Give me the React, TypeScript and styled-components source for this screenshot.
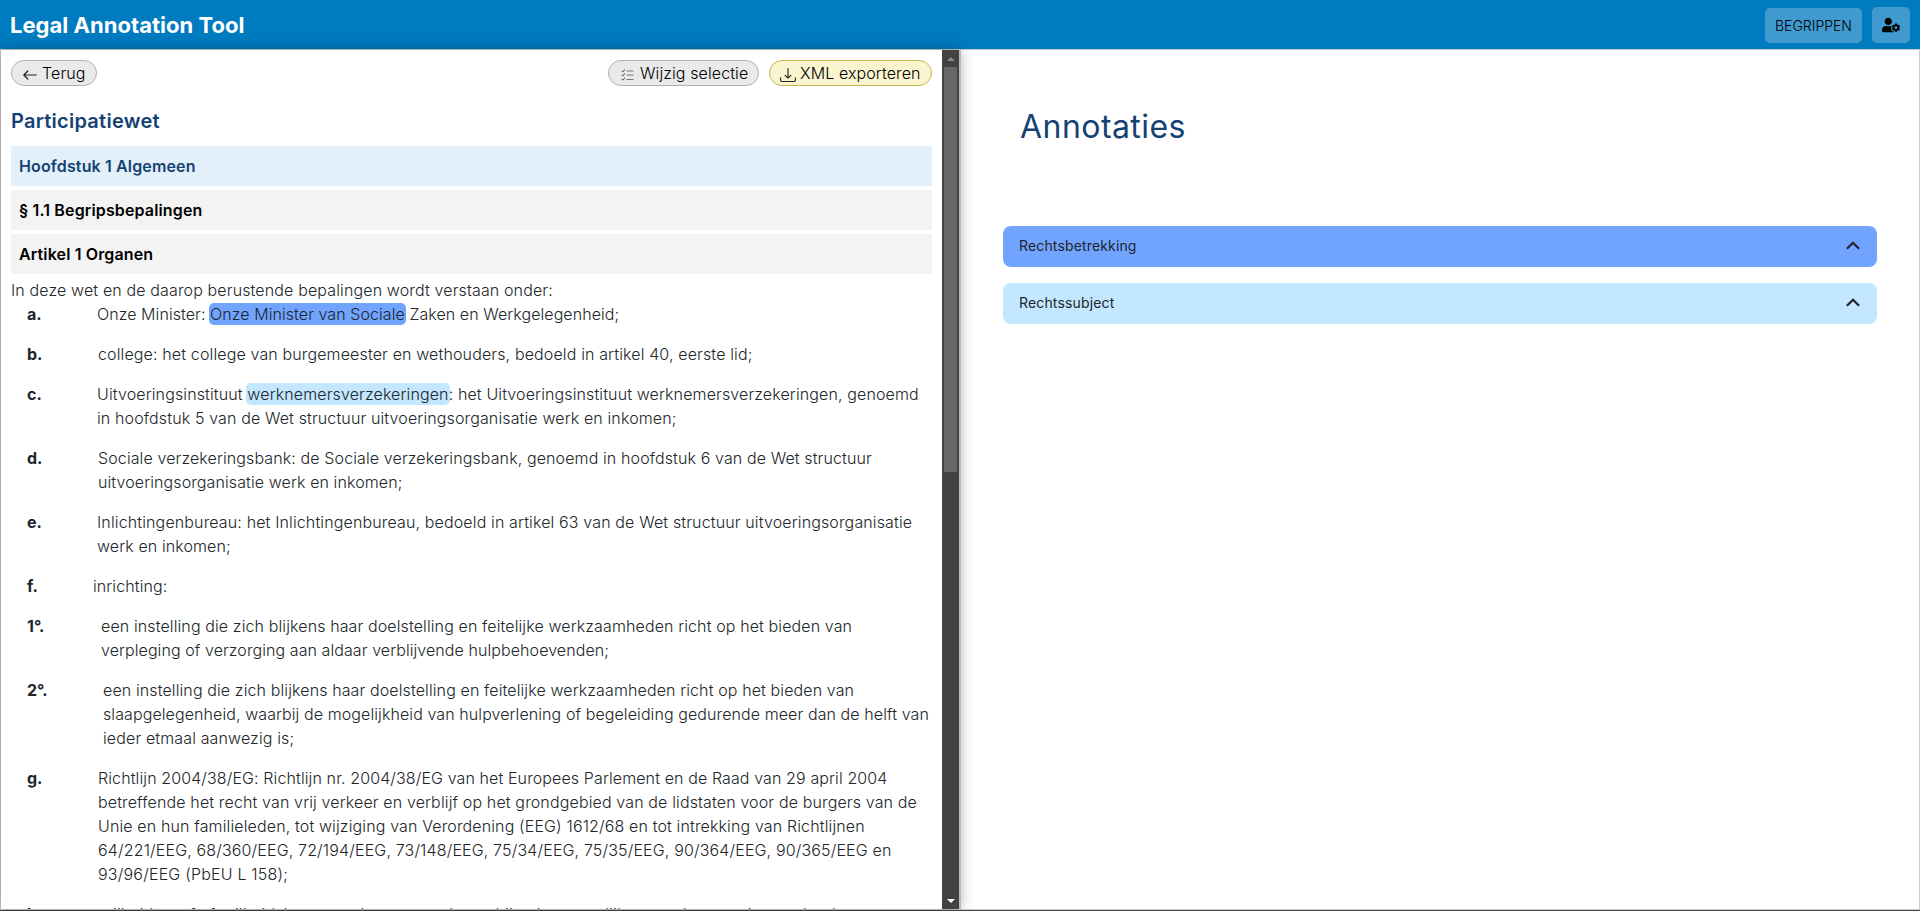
import React from "react";
import styled, { createGlobalStyle } from "styled-components";
import { FaUserCog } from "react-icons/fa";

const GlobalStyle = createGlobalStyle`
  *, *::before, *::after { box-sizing: border-box; }
  html, body { margin: 0; height: 100%; overflow: hidden; background: #fff; }
  body { font-family: Inter, "Liberation Sans", sans-serif; font-size: 16px; line-height: 24px; font-weight: 300; color: #212529; }
  h1, h2, h3, p { margin: 0; }
  button { font-family: inherit; cursor: pointer; }
`;

const Page = styled.div`
  display: flex;
  flex-direction: column;
  height: 911px;
  border-bottom: 1px solid #3d4a47;
`;

const Header = styled.header`
  display: flex;
  align-items: center;
  justify-content: space-between;
  height: 49px;
  padding: 1px 10px 0;
  background: #007bc0;
`;

const Brand = styled.h1`
  font-size: 22px;
  font-weight: 700;
  letter-spacing: 0.03px;
  color: #fff;
`;

const HeaderActions = styled.div`
  display: flex;
  align-items: center;
  gap: 10px;
`;

const HeaderButton = styled.button<{ $w: number; $h: number; $size?: number }>`
  display: flex;
  align-items: center;
  justify-content: center;
  width: ${(p) => p.$w}px;
  height: ${(p) => p.$h}px;
  padding: 0;
  border: 0;
  border-radius: 5px;
  background: #4099cf;
  color: #000;
  font-size: ${(p) => p.$size ?? 14}px;
  font-weight: 300;
`;

const Split = styled.div`
  display: flex;
  flex: 1;
  min-height: 0;
  border: 1px solid #ccc;
`;

const TextPane = styled.section`
  display: flex;
  width: 960px;
  box-shadow: 0 0 12px rgba(0, 0, 0, 0.3);
  border-right: 2px solid #bbb;
`;

const Document = styled.div`
  flex: 1;
  min-width: 0;
  padding: 10px 10px 0;
  overflow: hidden;
`;

const Scrollbar = styled.div`
  display: flex;
  flex-direction: column;
  align-items: center;
  width: 17px;
  flex: none;
  background: #424242;
`;

const ScrollArrow = styled.div<{ $end?: boolean }>`
  display: flex;
  align-items: center;
  justify-content: center;
  height: 17px;
  margin-top: ${(p) => (p.$end ? "auto" : "0")};
  svg { display: block; }
`;

const Thumb = styled.div`
  width: 13px;
  height: 405px;
  background: #686868;
`;

const Toolbar = styled.div`
  display: flex;
  justify-content: space-between;
  height: 26px;
`;

const ToolGroup = styled.div`
  display: flex;
  gap: 10px;
`;

const Pill = styled.button<{ $tone?: "yellow"; $w: number; $gap: number; $pad: number }>`
  display: flex;
  align-items: center;
  gap: ${(p) => p.$gap}px;
  width: ${(p) => p.$w}px;
  height: 26px;
  padding: 0 0 0 ${(p) => p.$pad}px;
  border: 1px solid ${(p) => (p.$tone ? "#c6b64f" : "#b1b1b1")};
  border-radius: 13px;
  background: ${(p) => (p.$tone ? "#faf4cf" : "#eaeaea")};
  color: #000;
  font-size: 16px;
  font-weight: 300;
  letter-spacing: 0.1px;
  white-space: nowrap;
  svg { flex: none; margin-top: 3px; }
`;

const LawTitle = styled.h2`
  margin: 23px 0 13px;
  font-size: 20px;
  line-height: 24px;
  font-weight: 600;
  letter-spacing: 0.25px;
  color: #154273;
`;

const SectionBar = styled.h3<{ $active?: boolean }>`
  height: 40px;
  margin-bottom: 4px;
  padding: 0 8px;
  line-height: 40px;
  font-size: 16px;
  font-weight: 600;
  letter-spacing: 0.14px;
  background: ${(p) => (p.$active ? "#e3f0f9" : "#f3f3f3")};
  color: ${(p) => (p.$active ? "#154273" : "#000")};
`;

const Intro = styled.p`
  margin-top: 4px;
  letter-spacing: 0.135px;
`;

const Items = styled.div`
  display: flex;
  flex-direction: column;
  gap: 16px;
`;

const Item = styled.div`
  display: flex;
  padding-left: 16px;
`;

const Label = styled.strong<{ $w: number }>`
  flex: none;
  width: ${(p) => p.$w}px;
  font-weight: 700;
`;

const Body = styled.p`
  white-space: nowrap;
`;

const Line = styled.span<{ $track: number }>`
  display: block;
  letter-spacing: ${(p) => p.$track}px;
`;

const Mark = styled.span<{ $tone: string }>`
  margin: 0 -1px;
  padding: 1px;
  border-radius: 5px;
  background: ${(p) => p.$tone};
`;

const NotesPane = styled.section`
  flex: 1;
  padding: 56px 42px 0;
`;

const NotesTitle = styled.h2`
  margin: 0 0 78px 17px;
  font-size: 32px;
  line-height: 42px;
  font-weight: 400;
  letter-spacing: 0.45px;
  color: #154273;
`;

const Accordion = styled.div<{ $tone: string }>`
  display: flex;
  align-items: center;
  justify-content: space-between;
  height: 41px;
  margin-bottom: 16px;
  padding: 0 17px 2px 16px;
  border-radius: 8px;
  background: ${(p) => p.$tone};
  font-size: 14px;
  font-weight: 400;
  letter-spacing: 0.15px;
`;

const blue = "#70a4ff";
const sky = "#c2e7ff";

type TextLine = [React.ReactNode, number];

const items: { label: string; w: number; lines: TextLine[] }[] = [
  { label: "a.", w: 70, lines: [[<>Onze Minister: <Mark $tone={blue}>Onze Minister van Sociale</Mark> Zaken en Werkgelegenheid;</>, 0.07]] },
  { label: "b.", w: 71, lines: [["college: het college van burgemeester en wethouders, bedoeld in artikel 40, eerste lid;", 0.135]] },
  {
    label: "c.",
    w: 70,
    lines: [
      [<>Uitvoeringsinstituut <Mark $tone={sky}>werknemersverzekeringen</Mark>: het Uitvoeringsinstituut werknemersverzekeringen, genoemd</>, 0.125],
      ["in hoofdstuk 5 van de Wet structuur uitvoeringsorganisatie werk en inkomen;", 0.13],
    ],
  },
  {
    label: "d.",
    w: 71,
    lines: [
      ["Sociale verzekeringsbank: de Sociale verzekeringsbank, genoemd in hoofdstuk 6 van de Wet structuur", 0.112],
      ["uitvoeringsorganisatie werk en inkomen;", 0.1],
    ],
  },
  {
    label: "e.",
    w: 70,
    lines: [
      ["Inlichtingenbureau: het Inlichtingenbureau, bedoeld in artikel 63 van de Wet structuur uitvoeringsorganisatie", 0.137],
      ["werk en inkomen;", 0.1],
    ],
  },
  { label: "f.", w: 66, lines: [["inrichting:", 0.1]] },
  {
    label: "1°.",
    w: 74,
    lines: [
      ["een instelling die zich blijkens haar doelstelling en feitelijke werkzaamheden richt op het bieden van", 0.115],
      ["verpleging of verzorging aan aldaar verblijvende hulpbehoevenden;", 0.08],
    ],
  },
  {
    label: "2°.",
    w: 76,
    lines: [
      ["een instelling die zich blijkens haar doelstelling en feitelijke werkzaamheden richt op het bieden van", 0.115],
      ["slaapgelegenheid, waarbij de mogelijkheid van hulpverlening of begeleiding gedurende meer dan de helft van", 0.09],
      ["ieder etmaal aanwezig is;", 0.13],
    ],
  },
  {
    label: "g.",
    w: 71,
    lines: [
      ["Richtlijn 2004/38/EG: Richtlijn nr. 2004/38/EG van het Europees Parlement en de Raad van 29 april 2004", 0.112],
      ["betreffende het recht van vrij verkeer en verblijf op het grondgebied van de lidstaten voor de burgers van de", 0.137],
      ["Unie en hun familieleden, tot wijziging van Verordening (EEG) 1612/68 en tot intrekking van Richtlijnen", 0.135],
      ["64/221/EEG, 68/360/EEG, 72/194/EEG, 73/148/EEG, 75/34/EEG, 75/35/EEG, 90/364/EEG, 90/365/EEG en", 0.15],
      ["93/96/EEG (PbEU L 158);", 0.2],
    ],
  },
  {
    label: "h.",
    w: 71,
    lines: [["vrijheidsstraf of vrijheidsbenemende maatregel: een bij onherroepelijk geworden vonnis opgelegde", 0.12]],
  },
];

const BackArrow = () => (
  <svg width="14" height="10" viewBox="0 0 14 10" fill="none" stroke="#222" strokeWidth="1.2" strokeLinecap="round" strokeLinejoin="round">
    <path d="M13.3 5H.8M4.8 1 .8 5l4 4" />
  </svg>
);

const ChecklistIcon = () => (
  <svg width="13" height="12" viewBox="0 0 13 12" fill="none">
    <path d="M5.5 2H12.5M5.5 6H12.5M5.5 10.5H12.5" stroke="#777" strokeWidth="1.2" />
    <path d="M.7 1.8 1.7 2.8 4 .5M.7 5.8 1.7 6.8 4 4.5M.7 10.1 1.7 11.1 4 8.8" stroke="#333" strokeWidth="1" />
  </svg>
);

const DownloadIcon = () => (
  <svg width="16" height="14" viewBox="0 0 16 14" fill="none" stroke="#222" strokeWidth="1.1" strokeLinecap="round" strokeLinejoin="round">
    <path d="M.6 9.8v2.2a1.5 1.5 0 0 0 1.5 1.5h11.8a1.5 1.5 0 0 0 1.5-1.5V9.8M8 .6v9.4M5.2 7.4 8 10.2l2.8-2.8" />
  </svg>
);

const Chevron = () => (
  <svg width="14" height="9" viewBox="0 0 14 9" fill="none" stroke="#212529" strokeWidth="2.2">
    <path d="M.9 7.7 7 1.7l6.1 6" />
  </svg>
);

export default function App() {
  return (
    <>
      <GlobalStyle />
      <Page>
        <Header>
          <Brand>Legal Annotation Tool</Brand>
          <HeaderActions>
            <HeaderButton $w={97} $h={35}>BEGRIPPEN</HeaderButton>
            <HeaderButton $w={38} $h={36} $size={18} aria-label="Beheer"><FaUserCog /></HeaderButton>
          </HeaderActions>
        </Header>
        <Split>
          <TextPane>
            <Document>
              <Toolbar>
                <Pill $w={86} $gap={5} $pad={11}><BackArrow />Terug</Pill>
                <ToolGroup>
                  <Pill $w={151} $gap={6} $pad={12}><ChecklistIcon />Wijzig selectie</Pill>
                  <Pill $tone="yellow" $w={163} $gap={4} $pad={10}><DownloadIcon />XML exporteren</Pill>
                </ToolGroup>
              </Toolbar>
              <LawTitle>Participatiewet</LawTitle>
              <SectionBar $active>Hoofdstuk 1 Algemeen</SectionBar>
              <SectionBar>§ 1.1 Begripsbepalingen</SectionBar>
              <SectionBar>Artikel 1 Organen</SectionBar>
              <Intro>In deze wet en de daarop berustende bepalingen wordt verstaan onder:</Intro>
              <Items>
                {items.map((it) => (
                  <Item key={it.label}>
                    <Label $w={it.w}>{it.label}</Label>
                    <Body>
                      {it.lines.map(([text, track], i) => (
                        <Line key={i} $track={track}>{text}</Line>
                      ))}
                    </Body>
                  </Item>
                ))}
              </Items>
            </Document>
            <Scrollbar>
              <ScrollArrow><svg width="8" height="4"><path d="M0 4 4 0l4 4z" fill="#8a8a8a" /></svg></ScrollArrow>
              <Thumb />
              <ScrollArrow $end><svg width="8" height="4"><path d="M0 0h8L4 4z" fill="#fff" /></svg></ScrollArrow>
            </Scrollbar>
          </TextPane>
          <NotesPane>
            <NotesTitle>Annotaties</NotesTitle>
            <Accordion $tone={blue}>Rechtsbetrekking<Chevron /></Accordion>
            <Accordion $tone={sky}>Rechtssubject<Chevron /></Accordion>
          </NotesPane>
        </Split>
      </Page>
    </>
  );
}
